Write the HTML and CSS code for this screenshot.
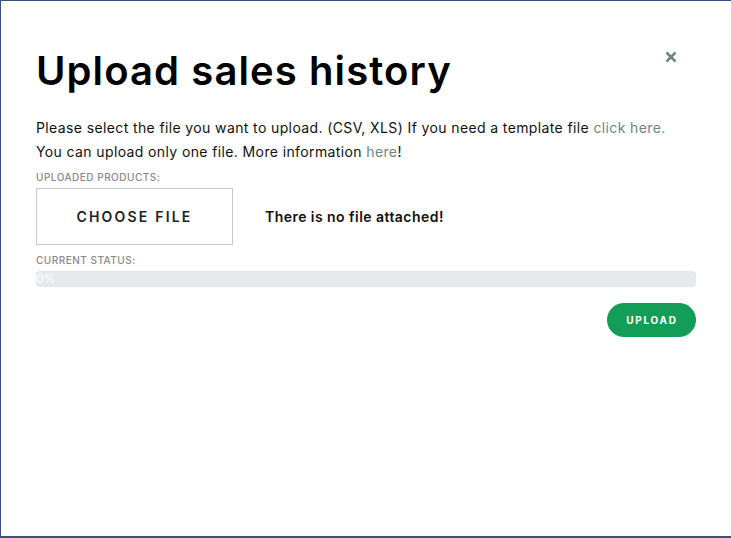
FILE: index.html
```html
<!DOCTYPE html>
<html>
<head>
<meta charset="utf-8">
<link rel="stylesheet" href="styles.css">
</head>
<body>
<div class="modal">
  <div class="header">
    <h1 class="title">Upload sales history</h1>
    <button class="close" aria-label="Close">
      <svg width="12" height="12" viewBox="0 0 12 12"><path d="M1.5 1.5 L10.5 10.5 M10.5 1.5 L1.5 10.5" stroke="#6f8583" stroke-width="2.6" stroke-linecap="butt"/></svg>
    </button>
  </div>
  <p class="desc">Please select the file you want to upload. (CSV, XLS) If you need a template file <a class="link" href="#">click here.</a></p>
  <p class="desc">You can upload only one file. More information <a class="link" href="#">here</a>!</p>
  <div class="label">Uploaded products:</div>
  <div class="file-row">
    <div class="choose">Choose file</div>
    <div class="nofile">There is no file attached!</div>
  </div>
  <div class="label status-label">Current status:</div>
  <div class="progress"><span class="progress-text">0%</span></div>
  <div class="actions"><button class="upload">Upload</button></div>
</div>
</body>
</html>
```
FILE: styles.css
```css
html, body { margin: 0; padding: 0; }
body {
  width: 731px;
  height: 538px;
  box-sizing: border-box;
  border-top: 1px solid #3a5180;
  border-left: 1px solid #3a5180;
  border-bottom: 2px solid #3a5180;
  background: #fff;
  font-family: Inter, "Open Sans", sans-serif;
  color: #111;
}
.modal {
  padding: 0 35px 0 35px;
}
.header {
  display: flex;
  justify-content: space-between;
  align-items: flex-start;
  padding-top: 40px;
}
.title {
  margin: 0;
  font-size: 40px;
  line-height: 60px;
  font-weight: 600;
  letter-spacing: 1.1px;
  color: #000;
}
.close {
  border: 0;
  background: none;
  padding: 0;
  margin: 10px 19px 0 0;
  width: 12px;
  height: 12px;
  display: block;
}
.close svg { display: block; }
.desc {
  margin: 0;
  font-size: 14px;
  line-height: 24px;
  letter-spacing: 0.38px;
  color: #111;
}
.header + .desc { margin-top: 15px; }
.link { color: #6f8583; text-decoration: none; }
.label {
  font-size: 10px;
  text-transform: uppercase;
  color: #8a8a8a;
  font-weight: 500;
  letter-spacing: 0.5px;
  margin-top: 6px;
  line-height: 14px;
}
.file-row {
  display: flex;
  align-items: center;
  margin-top: 4px;
}
.choose {
  box-sizing: border-box;
  width: 197px;
  height: 57px;
  border: 1px solid #c9c9cc;
  display: flex;
  align-items: center;
  justify-content: center;
  font-size: 14px;
  font-weight: 600;
  text-transform: uppercase;
  letter-spacing: 2.2px;
  color: #222;
}
.nofile {
  margin-left: 32px;
  font-size: 14px;
  font-weight: 600;
  letter-spacing: 0.45px;
  color: #111;
}
.status-label { margin-top: 8px; }
.progress {
  margin-top: 4px;
  height: 16px;
  border-radius: 4px;
  background: #e6e9ec;
  display: flex;
  align-items: center;
}
.progress-text {
  font-size: 12px;
  color: #fff;
  line-height: 16px;
}
.actions {
  display: flex;
  justify-content: flex-end;
  margin-top: 16px;
}
.upload {
  width: 89px;
  height: 34px;
  border: 0;
  border-radius: 17px;
  background: #139e58;
  color: #fff;
  font-family: Inter, "Open Sans", sans-serif;
  font-size: 10px;
  font-weight: 700;
  letter-spacing: 1.7px;
  text-transform: uppercase;
  padding: 0 0 0 1px;
}
```
